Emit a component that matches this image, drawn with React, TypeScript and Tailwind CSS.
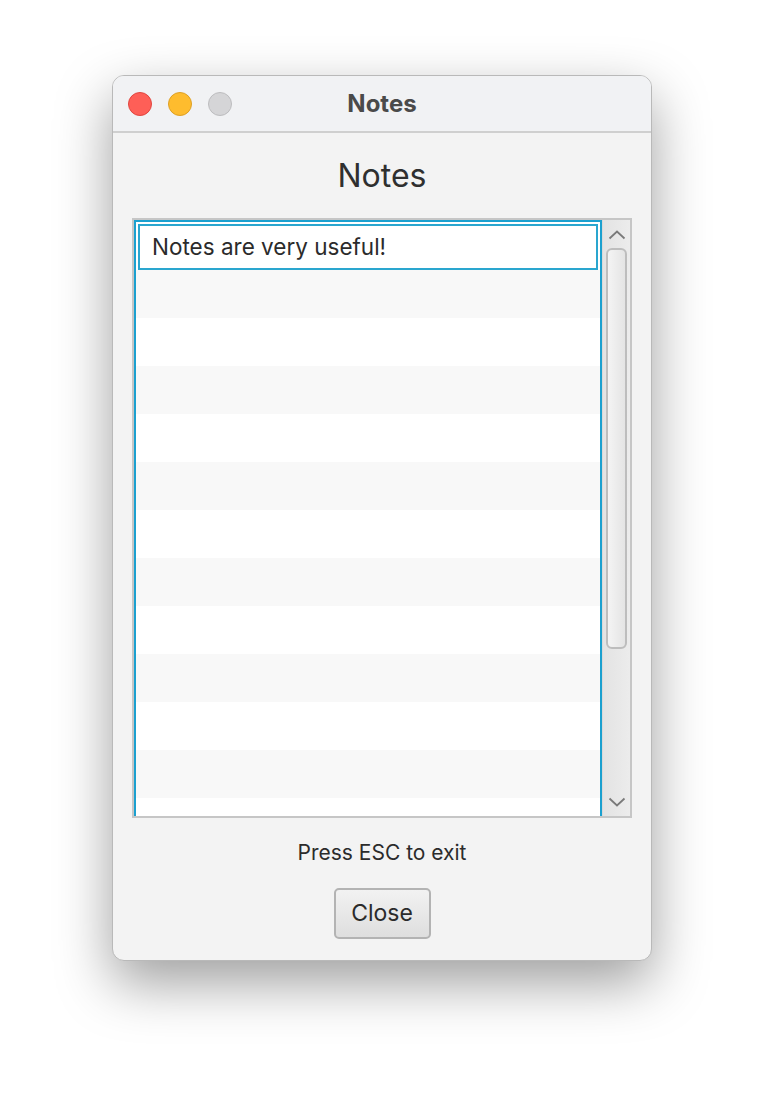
import React from "react";

const rows = Array.from({ length: 12 });

export default function App() {
  return (
    <div className="w-[764px] h-[1108px] bg-white pt-[75px] pl-[112px]" style={{ fontFamily: "Inter, 'Noto Sans', sans-serif" }}>
      <div className="w-[540px] h-[886px] rounded-[12px] bg-[#f3f3f3] border border-[#b9b9b9] shadow-[0_22px_55px_rgba(0,0,0,0.38)] overflow-hidden flex flex-col">
        <div className="h-[57px] bg-[#f1f2f4] border-b-2 border-[#cfcfcf] flex items-center relative shrink-0">
          <div className="flex items-center gap-[16px] pl-[15px]">
            <div className="w-[24px] h-[24px] rounded-full bg-[#fe5f57] border border-[#e1463f]" />
            <div className="w-[24px] h-[24px] rounded-full bg-[#febc2e] border border-[#dea024]" />
            <div className="w-[24px] h-[24px] rounded-full bg-[#d5d5d7] border border-[#bdbdbf]" />
          </div>
          <div className="absolute inset-0 flex items-center justify-center text-[24px] font-bold text-[#4a4a4a] pointer-events-none">Notes</div>
        </div>
        <div className="flex flex-col items-center">
          <div className="mt-[21px] h-[44px] flex items-center text-[32px] text-[#2f2f2f]">Notes</div>
          <div className="mt-[20px] w-[500px] h-[600px] border-2 border-[#c6c6c6] bg-white flex">
            <div className="w-[468px] h-full border-2 border-b-0 border-[#1ba0cf] overflow-hidden flex flex-col">
              {rows.map((_, i) =>
                i === 0 ? (
                  <div key={i} className="h-[48px] shrink-0 bg-white px-[2px] pt-[2px] pb-0 flex">
                    <div className="flex-1 border-2 border-[#2aa6cf] flex items-center pl-[12px] text-[22.5px] text-[#2b2b2b]">Notes are very useful!</div>
                  </div>
                ) : (
                  <div key={i} className={`h-[48px] shrink-0 ${i % 2 === 1 ? "bg-[#f8f8f8]" : "bg-white"}`} />
                )
              )}
              <div className="flex-1 bg-white" />
            </div>
            <div className="w-[28px] h-full bg-gradient-to-r from-[#e3e3e3] to-[#ececec] border-l border-[#d9d9d9] flex flex-col items-center">
              <div className="h-[28px] flex items-center justify-center">
                <svg width="18" height="11" viewBox="0 0 18 11"><path d="M1.5 9.5 L9 2.5 L16.5 9.5" fill="none" stroke="#7a7a7a" strokeWidth="1.8" /></svg>
              </div>
              <div className="w-[21px] h-[401px] rounded-[6px] border-2 border-[#bdbdbd] bg-gradient-to-r from-[#f4f4f4] to-[#e4e4e4]" />
              <div className="flex-1" />
              <div className="h-[28px] flex items-center justify-center">
                <svg width="18" height="11" viewBox="0 0 18 11"><path d="M1.5 1.5 L9 8.5 L16.5 1.5" fill="none" stroke="#7a7a7a" strokeWidth="1.8" /></svg>
              </div>
            </div>
          </div>
          <div className="mt-[21px] h-[28px] flex items-center text-[21px] text-[#2b2b2b]">Press ESC to exit</div>
          <button className="mt-[21px] w-[97px] h-[51px] rounded-[5px] border-2 border-[#b3b3b3] bg-gradient-to-b from-[#f2f2f2] to-[#dedede] text-[23px] text-[#2b2b2b] flex items-center justify-center">Close</button>
        </div>
      </div>
    </div>
  );
}
